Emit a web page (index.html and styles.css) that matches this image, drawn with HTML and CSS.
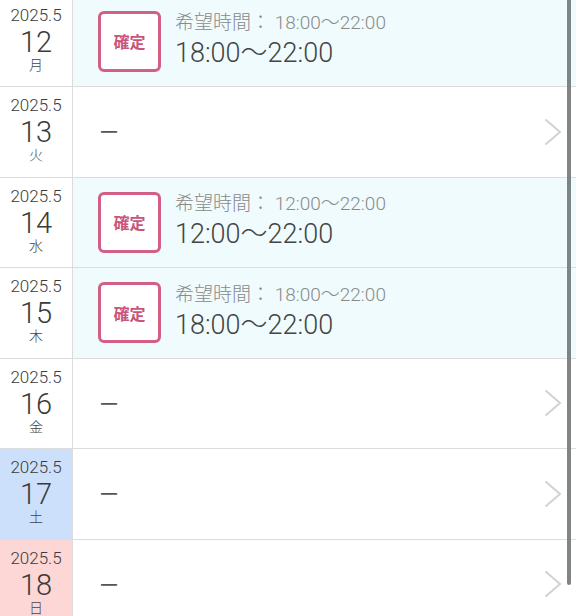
FILE: index.html
```html
<!DOCTYPE html>
<html lang="ja">
<head>
<meta charset="utf-8">
<link rel="stylesheet" href="styles.css">
</head>
<body>
<div class="list">
  <div class="row confirmed">
    <div class="date"><span class="ym">2025.5</span><span class="day">12</span><span class="wd">月</span></div>
    <div class="content">
      <div class="badge">確定</div>
      <div class="times"><div class="hope">希望時間：&nbsp;18:00〜22:00</div><div class="time">18:00〜22:00</div></div>
    </div>
  </div>
  <div class="row">
    <div class="date"><span class="ym">2025.5</span><span class="day">13</span><span class="wd">火</span></div>
    <div class="content"><span class="dash">ー</span><svg class="chev" viewBox="0 0 18 28"><polyline points="1.5,1.5 16,14 1.5,26.5"/></svg></div>
  </div>
  <div class="row confirmed">
    <div class="date"><span class="ym">2025.5</span><span class="day">14</span><span class="wd">水</span></div>
    <div class="content">
      <div class="badge">確定</div>
      <div class="times"><div class="hope">希望時間：&nbsp;12:00〜22:00</div><div class="time">12:00〜22:00</div></div>
    </div>
  </div>
  <div class="row confirmed">
    <div class="date"><span class="ym">2025.5</span><span class="day">15</span><span class="wd">木</span></div>
    <div class="content">
      <div class="badge">確定</div>
      <div class="times"><div class="hope">希望時間：&nbsp;18:00〜22:00</div><div class="time">18:00〜22:00</div></div>
    </div>
  </div>
  <div class="row">
    <div class="date"><span class="ym">2025.5</span><span class="day">16</span><span class="wd">金</span></div>
    <div class="content"><span class="dash">ー</span><svg class="chev" viewBox="0 0 18 28"><polyline points="1.5,1.5 16,14 1.5,26.5"/></svg></div>
  </div>
  <div class="row">
    <div class="date sat"><span class="ym">2025.5</span><span class="day">17</span><span class="wd">土</span></div>
    <div class="content"><span class="dash">ー</span><svg class="chev" viewBox="0 0 18 28"><polyline points="1.5,1.5 16,14 1.5,26.5"/></svg></div>
  </div>
  <div class="row">
    <div class="date sun"><span class="ym">2025.5</span><span class="day">18</span><span class="wd">日</span></div>
    <div class="content"><span class="dash">ー</span><svg class="chev" viewBox="0 0 18 28"><polyline points="1.5,1.5 16,14 1.5,26.5"/></svg></div>
  </div>
</div>
<div class="scrollbar"></div>
</body>
</html>
```
FILE: styles.css
```css
html, body {
  margin: 0;
  padding: 0;
  background: #fff;
  overflow: hidden;
}
body {
  width: 576px;
  height: 616px;
  position: relative;
  font-family: Roboto, "Noto Sans CJK JP", sans-serif;
  color: #444;
}
.list {
  margin-top: -3.5px;
}
.row {
  display: grid;
  grid-template-columns: 73px 1fr;
  height: 89.5px;
  border-bottom: 1px solid #dcdcdc;
}
.date {
  display: flex;
  flex-direction: column;
  align-items: center;
  padding-top: 8px;
  border-right: 1px solid #dcdcdc;
  background: #fff;
  color: #3a3a3a;
}
.date.sat { background: #cde0fb; }
.date.sun { background: #fdd6d6; }
.ym {
  font-size: 17px;
  line-height: 20px;
  font-weight: 300;
}
.day {
  font-size: 29px;
  line-height: 28px;
  margin-top: 3px;
  font-weight: 300;
}
.wd {
  font-family: "Noto Sans CJK JP", sans-serif;
  font-size: 14px;
  line-height: 16px;
  font-weight: 300;
  color: #444;
}
.content {
  display: flex;
  align-items: center;
  padding-left: 25px;
  position: relative;
}
.confirmed .content {
  background: #effbfd;
}
.badge {
  box-sizing: border-box;
  width: 63px;
  height: 61px;
  border: 3px solid #d35f84;
  border-radius: 6px;
  background: #fff;
  color: #c9557b;
  font-family: "Noto Sans CJK JP", sans-serif;
  font-size: 16px;
  font-weight: 700;
  display: flex;
  align-items: center;
  justify-content: center;
}
.times {
  margin-left: 14px;
  margin-top: -4px;
}
.hope {
  font-size: 19px;
  line-height: 28px;
  color: #8a8a8a;
  font-weight: 300;
}
.time {
  font-size: 27px;
  line-height: 32px;
  color: #444;
  font-weight: 300;
}
.dash {
  font-family: "Noto Sans CJK JP", sans-serif;
  font-size: 20px;
  color: #555;
  margin-left: 1px;
}
.chev {
  position: absolute;
  right: 14px;
  top: 50%;
  width: 18px;
  height: 28px;
  margin-top: -14px;
  fill: none;
  stroke: #d2d2d2;
  stroke-width: 2;
}
.scrollbar {
  position: absolute;
  left: 567px;
  top: 0;
  width: 4px;
  height: 585px;
  background: #7f8585;
  border-radius: 0 0 2px 2px;
}
```
